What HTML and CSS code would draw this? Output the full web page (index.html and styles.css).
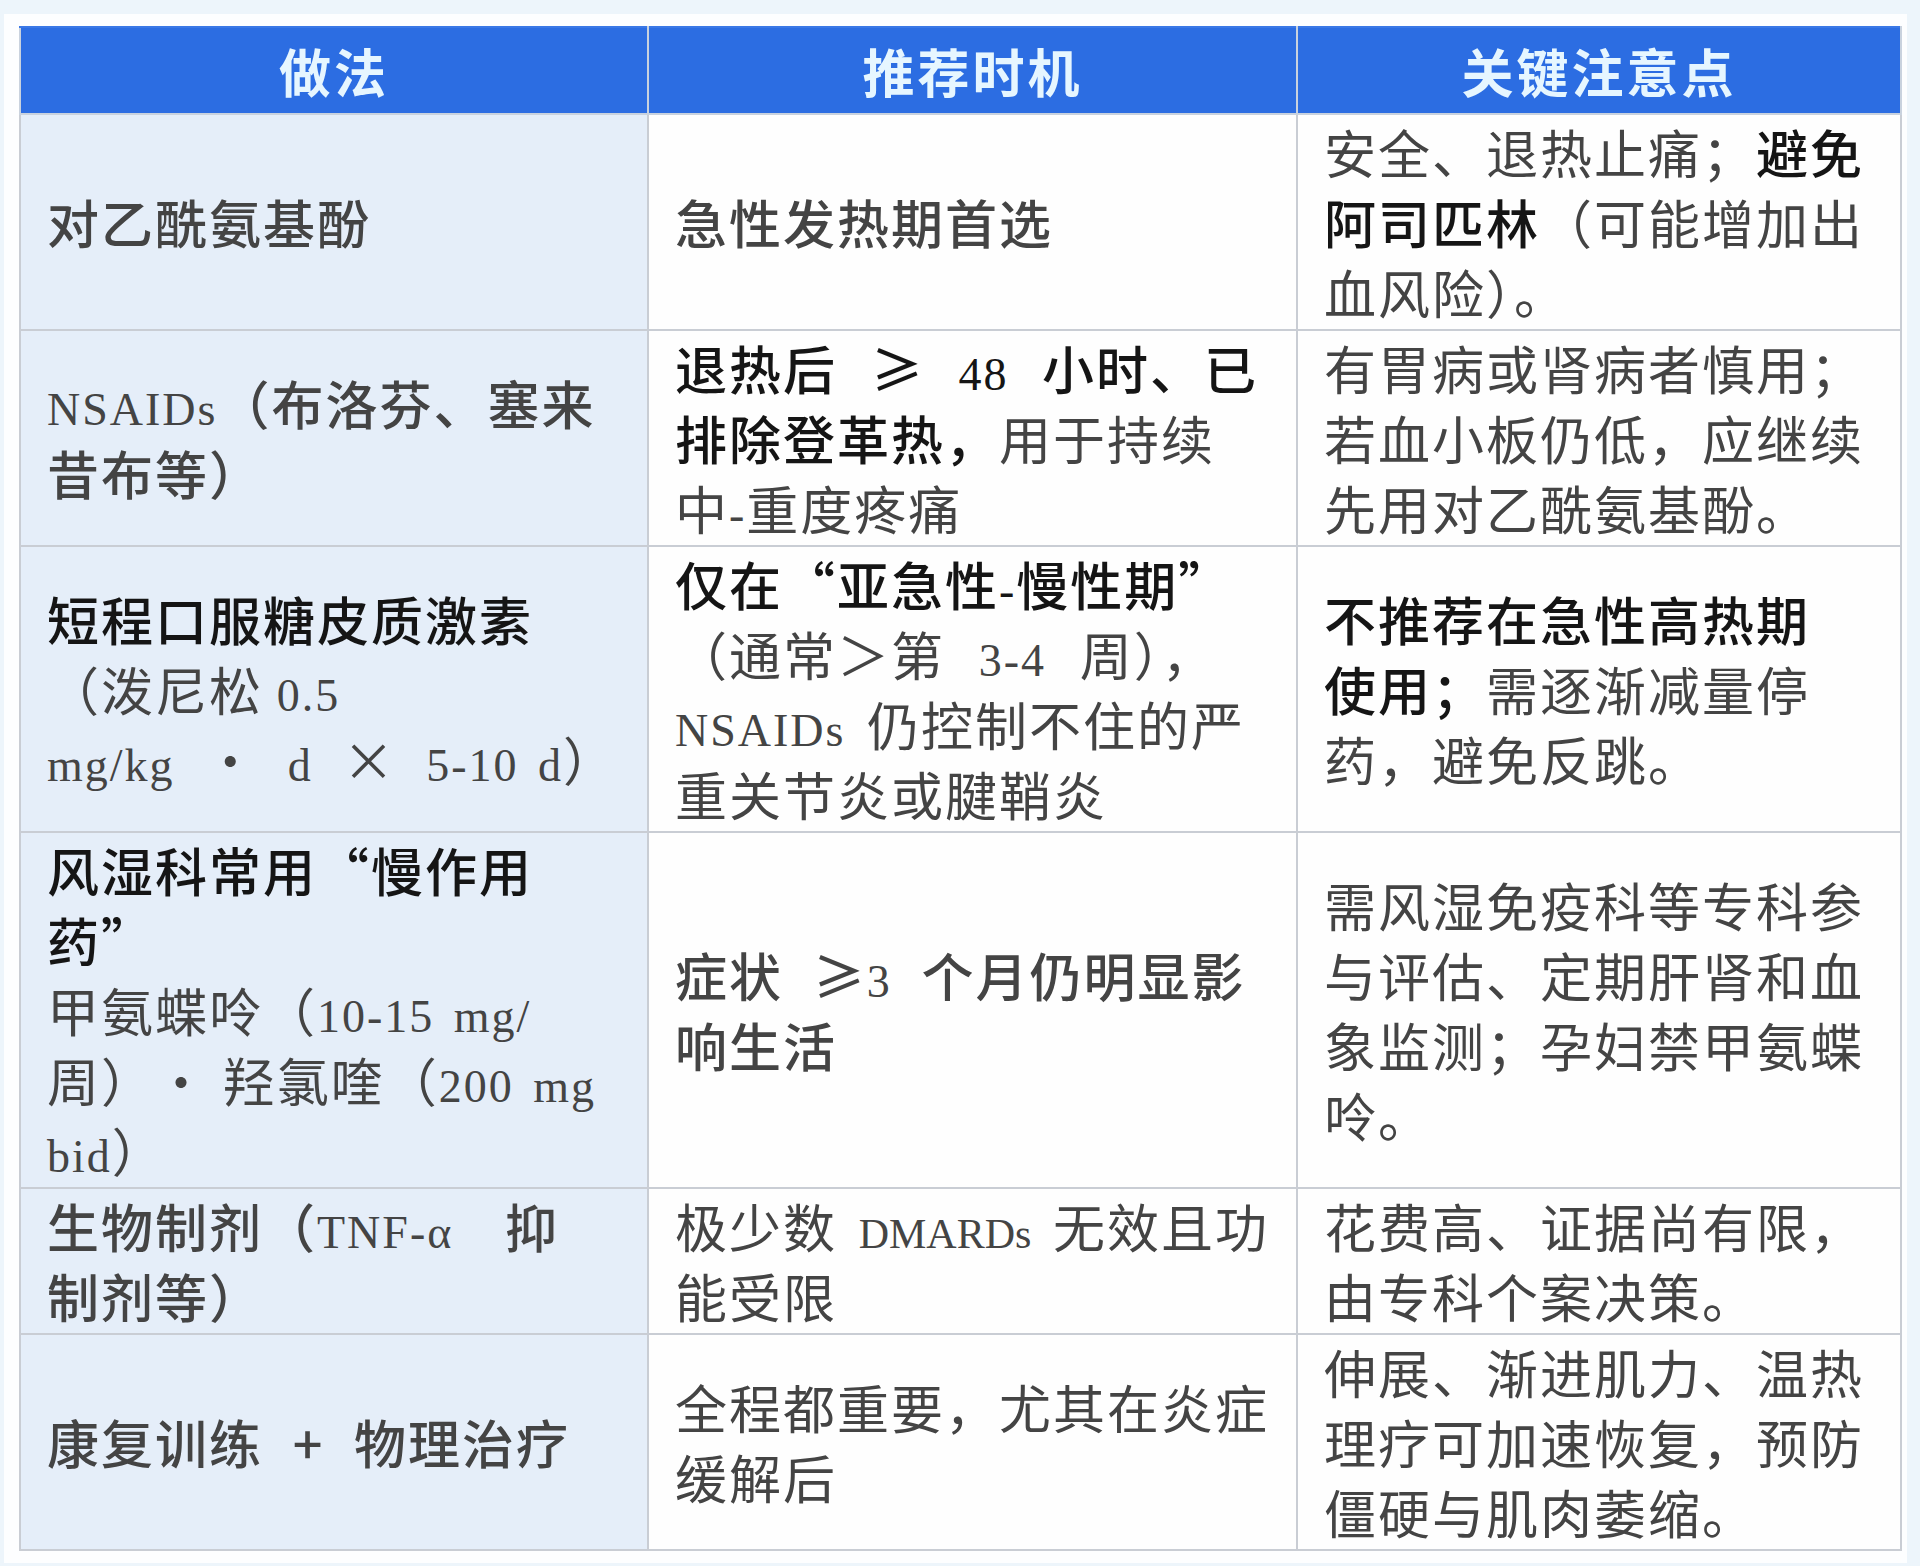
FILE: index.html
```html
<!DOCTYPE html>
<html lang="zh-CN">
<head>
<meta charset="utf-8">
<title>治疗方案</title>
<link rel="stylesheet" href="styles.css">
</head>
<body>
<div class="panel">
<table class="grid">
  <colgroup>
    <col class="w1"><col class="w2"><col class="w3">
  </colgroup>
  <thead>
    <tr><th>做法</th><th>推荐时机</th><th>关键注意点</th></tr>
  </thead>
  <tbody>
    <tr>
      <td class="c1 b"><span class="l">对乙酰氨基酚</span></td>
      <td class="b"><span class="l">急性发热期首选</span></td>
      <td>
        <span class="l">安全、退热止痛；<b class="b">避免</b></span>
        <span class="l"><b class="b">阿司匹林</b>（可能增加出</span>
        <span class="l">血风险）。</span>
      </td>
    </tr>
    <tr>
      <td class="c1 b">
        <span class="l"><span class="m">NSAIDs</span>（布洛芬、塞来</span>
        <span class="l">昔布等）</span>
      </td>
      <td>
        <span class="l b ws2">退热后 ≥ <span class="m">48</span> 小时、已</span>
        <span class="l"><b class="b">排除登革热，</b>用于持续</span>
        <span class="l">中<span class="m">-</span>重度疼痛</span>
      </td>
      <td>
        <span class="l">有胃病或肾病者慎用；</span>
        <span class="l">若血小板仍低，应继续</span>
        <span class="l">先用对乙酰氨基酚。</span>
      </td>
    </tr>
    <tr>
      <td class="c1">
        <span class="l b">短程口服糖皮质激素</span>
        <span class="l">（泼尼松 <span class="m">0.5</span></span>
        <span class="l ws1"><span class="m">mg/kg</span> • <span class="m">d</span> × <span class="m">5-10 d</span>）</span>
      </td>
      <td>
        <span class="l b">仅在“亚急性<span class="m">-</span>慢性期”</span>
        <span class="l ws2">（通常＞第 <span class="m">3-4</span> 周），</span>
        <span class="l ws0"><span class="m">NSAIDs</span> 仍控制不住的严</span>
        <span class="l">重关节炎或腱鞘炎</span>
      </td>
      <td>
        <span class="l b">不推荐在急性高热期</span>
        <span class="l"><b class="b">使用；</b>需逐渐减量停</span>
        <span class="l">药，避免反跳。</span>
      </td>
    </tr>
    <tr>
      <td class="c1">
        <span class="l b">风湿科常用“慢作用</span>
        <span class="l b">药”</span>
        <span class="l ws1">甲氨蝶呤（<span class="m">10-15 mg/</span></span>
        <span class="l">周）• 羟氯喹（<span class="m">200 mg</span></span>
        <span class="l"><span class="m">bid</span>）</span>
      </td>
      <td class="b">
        <span class="l ws1">症状 ≥<span class="m">3</span> 个月仍明显影</span>
        <span class="l">响生活</span>
      </td>
      <td>
        <span class="l">需风湿免疫科等专科参</span>
        <span class="l">与评估、定期肝肾和血</span>
        <span class="l">象监测；孕妇禁甲氨蝶</span>
        <span class="l">呤。</span>
      </td>
    </tr>
    <tr>
      <td class="c1 b">
        <span class="l ws3">生物制剂（<span class="m">TNF-α</span> 抑</span>
        <span class="l">制剂等）</span>
      </td>
      <td>
        <span class="l ws0">极少数 <span class="m n">DMARDs</span> 无效且功</span>
        <span class="l">能受限</span>
      </td>
      <td>
        <span class="l">花费高、证据尚有限，</span>
        <span class="l">由专科个案决策。</span>
      </td>
    </tr>
    <tr>
      <td class="c1 b"><span class="l ws1">康复训练 + 物理治疗</span></td>
      <td>
        <span class="l">全程都重要，尤其在炎症</span>
        <span class="l">缓解后</span>
      </td>
      <td>
        <span class="l">伸展、渐进肌力、温热</span>
        <span class="l">理疗可加速恢复，预防</span>
        <span class="l">僵硬与肌肉萎缩。</span>
      </td>
    </tr>
  </tbody>
</table>
</div>
</body>
</html>
```

FILE: styles.css
```css
html, body {
  margin: 0;
  padding: 0;
}
body {
  background: #edf5fb;
  font-family: "Noto Sans CJK SC", "Noto Sans", sans-serif;
  width: 1920px;
  height: 1566px;
  overflow: hidden;
}
.panel {
  margin: 14px 13px 6px 4px;
  background: #fdfeff;
  padding: 12px 7px 12px 15px;
}
.grid {
  border-collapse: collapse;
  table-layout: fixed;
  width: 1881px;
}
.w1 { width: 628px; }
.w2 { width: 649px; }
.w3 { width: 604px; }

.grid th {
  height: 85px;
  padding: 0;
  background: #2c6de2;
  color: #e6f6ff;
  font-size: 52px;
  font-weight: 700;
  letter-spacing: 3px;
  text-align: center;
  vertical-align: middle;
  border: 2px solid #c9d2de;
  border-top-color: #3a78e6;
}
.grid td {
  border: 2px solid #c9cdd4;
  padding: 2px 16px 2px 26px;
  font-size: 52px;
  letter-spacing: 2px;
  line-height: 70px;
  color: #444444;
  vertical-align: middle;
  text-align: left;
  background: #fefefe;
}
.grid td.c1 {
  background: #e5eef9;
}
.l {
  display: block;
  white-space: nowrap;
}
.ws0 { word-spacing: 8px; }
.ws1 { word-spacing: 16px; }
.ws2 { word-spacing: 20px; }
.ws3 { word-spacing: 38px; }
.b {
  color: #151515;
  font-weight: 500;
}
b.b {
  font-weight: 500;
}
.m {
  font-family: "Liberation Serif", serif;
  font-size: 46px;
  letter-spacing: 2px;
  word-spacing: 6px;
  line-height: 1;
}
.m.n {
  font-size: 42px;
  letter-spacing: 0;
}
```
